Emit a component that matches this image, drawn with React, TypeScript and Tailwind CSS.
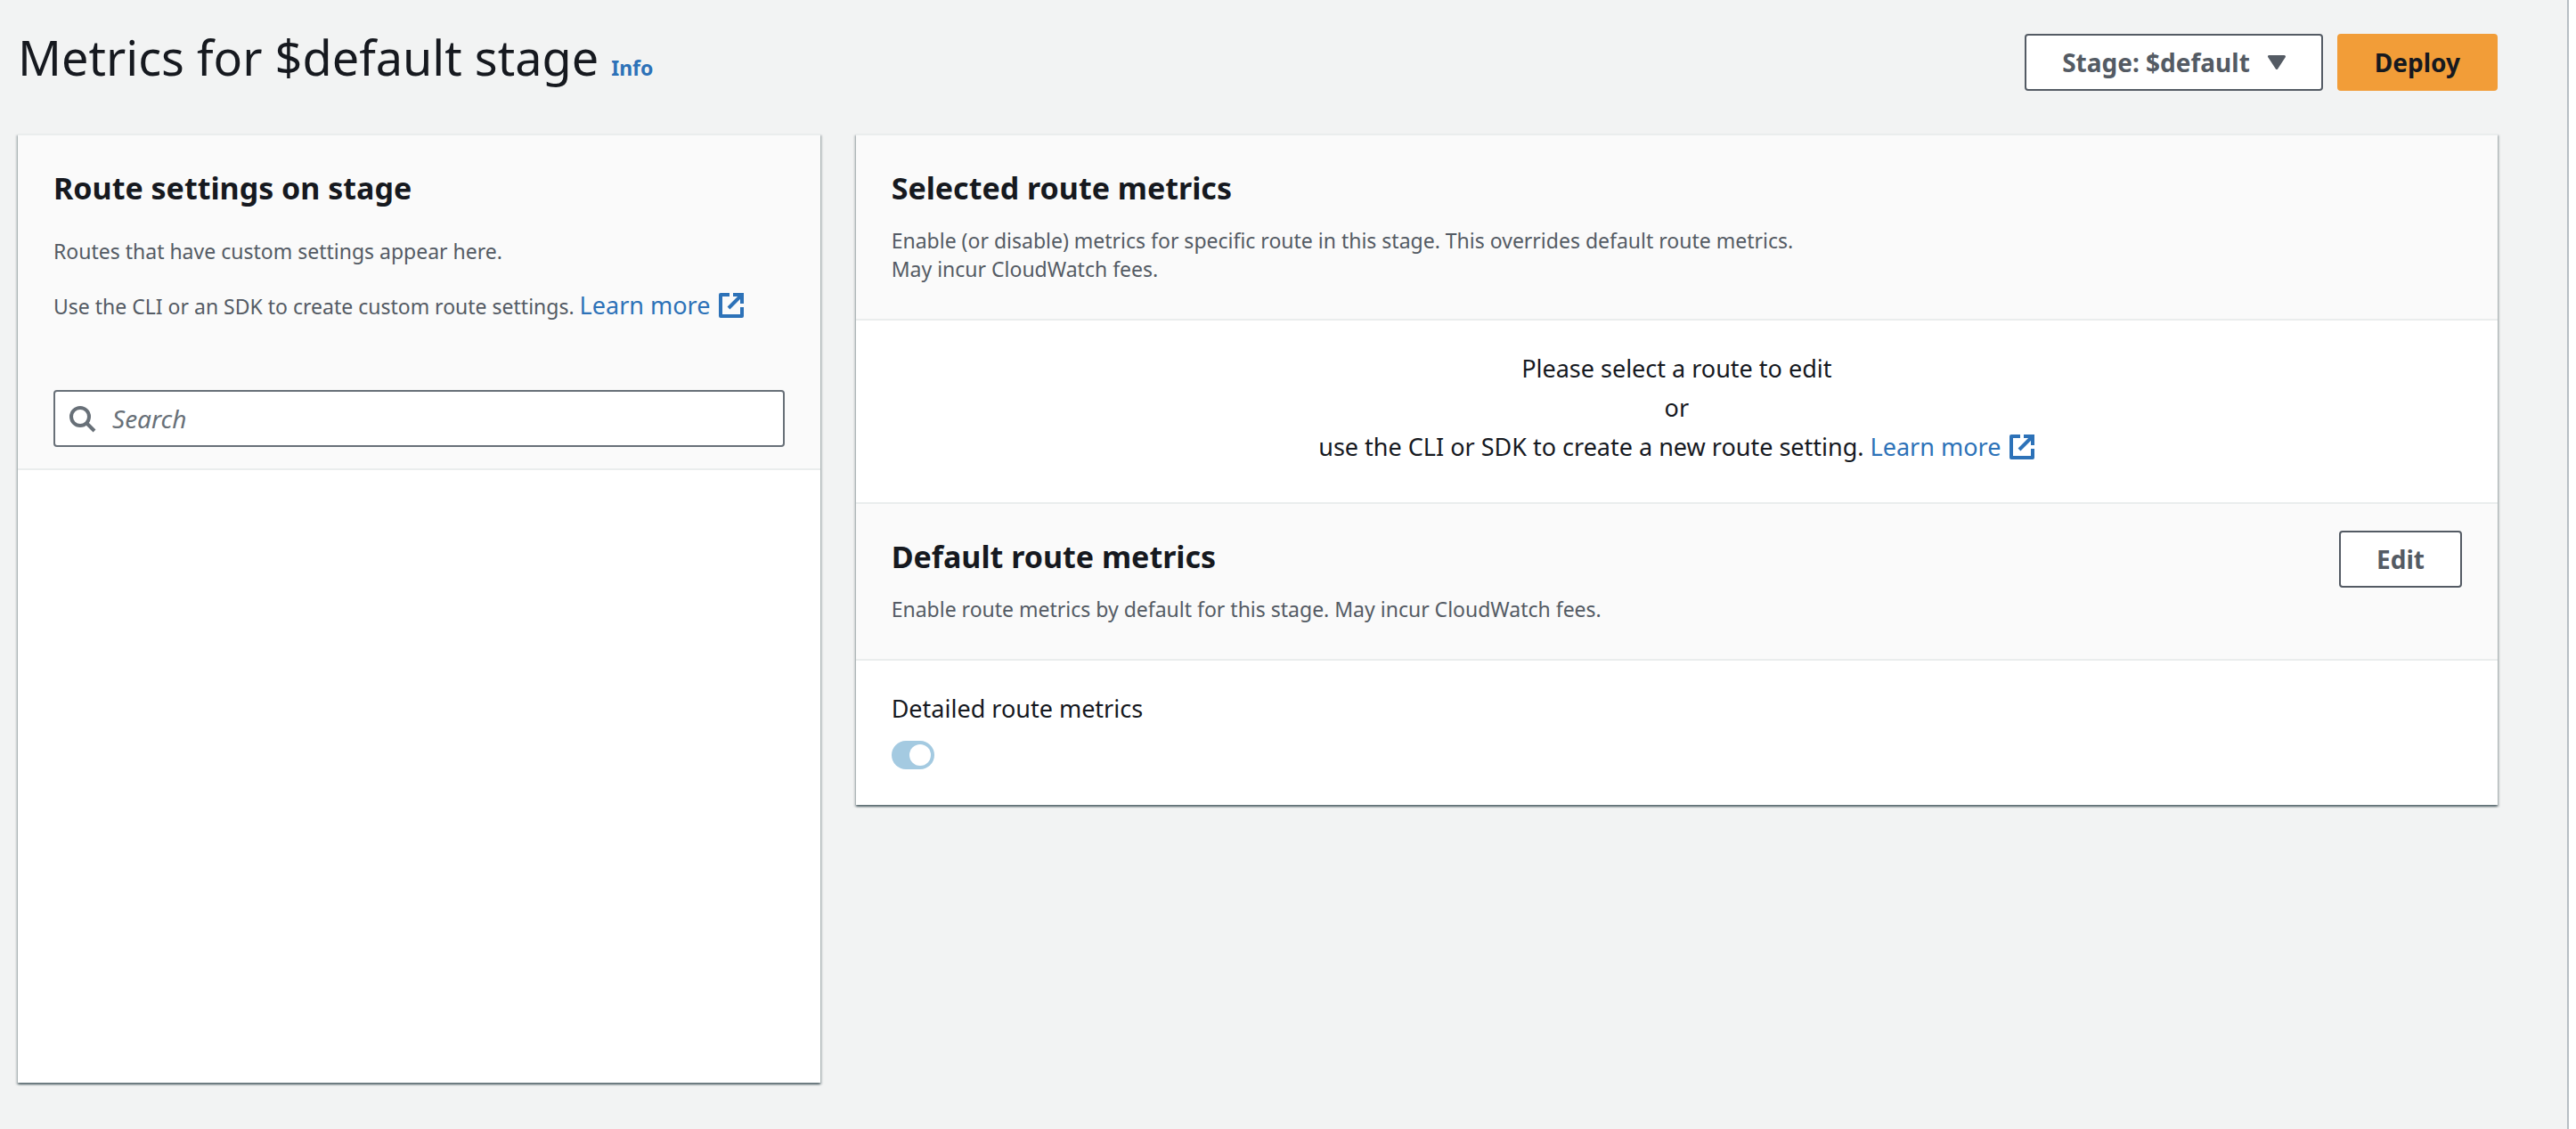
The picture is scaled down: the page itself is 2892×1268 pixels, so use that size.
import { useState } from "react";

function ExternalIcon() {
  return (
    <svg viewBox="0 0 28 28" className="ml-2.5 inline-block size-7 align-[-4px]" aria-hidden="true">
      <path d="M12 2H2v24h24V16" fill="none" stroke="currentColor" strokeWidth="4" strokeLinejoin="round" />
      <path d="M16 2h10v10M26 2L11 17" fill="none" stroke="currentColor" strokeWidth="4" />
    </svg>
  );
}

function LearnMore() {
  return (
    <a href="#learn-more" className="text-[27px] leading-none whitespace-nowrap text-[#2d72b8]">
      Learn more
      <ExternalIcon />
    </a>
  );
}

const cardClass =
  "border-t-2 border-[#eaeded] bg-white shadow-[0_2px_2px_0_rgba(0,28,36,0.5),2px_2px_2px_0_rgba(0,28,36,0.15),-2px_2px_2px_0_rgba(0,28,36,0.15)]";
const buttonClass = "flex h-16 items-center rounded-sm border-2 px-10 text-[28px] font-bold";

export default function App() {
  const [query, setQuery] = useState("");
  return (
    <div className="flex min-h-screen bg-[#f2f3f3] font-['Noto_Sans',sans-serif] text-[#16191f]">
      <main className="min-w-0 flex-1 pr-[78px] pb-12 pl-5">
        <header className="flex h-[150px] items-start justify-between pt-[38px]">
          <h1 className="-mt-3 text-[54px] leading-[76px]">
            Metrics for $default stage{" "}
            <a href="#info" className="text-[23px] font-bold text-[#2d72b8]">Info</a>
          </h1>
          <div className="flex gap-4">
            <button type="button" className={buttonClass + " gap-5 border-[#545b64] bg-white text-[#545b64]"}>
              Stage: $default
              <svg viewBox="0 0 20 16" className="h-4 w-5" aria-hidden="true">
                <path d="M1.5 1.5h17L10 14.5z" fill="currentColor" stroke="currentColor" strokeWidth="3" strokeLinejoin="round" />
              </svg>
            </button>
            <button type="button" className={buttonClass + " border-[#f29d38] bg-[#f29d38]"}>Deploy</button>
          </div>
        </header>

        <div className="grid grid-cols-[minmax(0,901fr)_minmax(0,1844fr)] items-start gap-10">
          <section className={cardClass + " min-h-[1066px]"}>
            <div className="border-b-2 border-[#eaeded] bg-[#fafafa] px-10 pt-[34px] pb-6">
              <h2 className="text-[34px] leading-[50px] font-bold">Route settings on stage</h2>
              <p className="mt-[30px] text-[23px] leading-8 text-[#545b64]">Routes that have custom settings appear here.</p>
              <p className="mt-[30px] text-[23px] leading-8 text-[#545b64]">
                Use the CLI or an SDK to create custom route settings. <LearnMore />
              </p>
              <label className="mt-[78px] flex h-16 items-center gap-4 rounded-sm border-2 border-[#687078] bg-white px-4">
                <svg viewBox="0 0 32 32" className="size-8 text-[#687078]" aria-hidden="true">
                  <circle cx="12" cy="14" r="10" fill="none" stroke="currentColor" strokeWidth="4" />
                  <path d="M19 21l9 9" stroke="currentColor" strokeWidth="4" />
                </svg>
                <input
                  type="search"
                  aria-label="Search"
                  placeholder="Search"
                  value={query}
                  onChange={(e) => setQuery(e.target.value)}
                  className="min-w-0 flex-1 bg-transparent text-[28px] outline-none placeholder:text-[#687078] placeholder:italic"
                />
              </label>
            </div>
          </section>

          <section className={cardClass}>
            <div className="border-b-2 border-[#eaeded] bg-[#fafafa] px-10 pt-[34px] pb-10">
              <h2 className="text-[34px] leading-[50px] font-bold">Selected route metrics</h2>
              <p className="mt-[18px] text-[23px] leading-8 text-[#545b64]">
                Enable (or disable) metrics for specific route in this stage. This overrides default route metrics.
                <br />
                May incur CloudWatch fees.
              </p>
            </div>
            <div className="px-10 pt-8 pb-10 text-center text-[27px] leading-[44px]">
              <p>Please select a route to edit</p>
              <p>or</p>
              <p>use the CLI or SDK to create a new route setting. <LearnMore /></p>
            </div>
            <div className="flex items-start justify-between border-y-2 border-[#eaeded] bg-[#fafafa] px-10 pt-[30px] pb-10">
              <div className="pt-1">
                <h2 className="text-[34px] leading-[50px] font-bold">Default route metrics</h2>
                <p className="mt-[18px] text-[23px] leading-8 text-[#545b64]">
                  Enable route metrics by default for this stage. May incur CloudWatch fees.
                </p>
              </div>
              <button type="button" className={buttonClass + " border-[#545b64] bg-white text-[#545b64]"}>Edit</button>
            </div>
            <div className="px-10 pt-8 pb-10">
              <label htmlFor="detailed" className="block text-[27px] leading-[44px]">Detailed route metrics</label>
              <input
                id="detailed"
                type="checkbox"
                role="switch"
                defaultChecked
                disabled
                className="mt-3.5 block h-8 w-12 appearance-none rounded-full bg-[#a4cae1] before:mt-1 before:ml-5 before:block before:size-6 before:rounded-full before:bg-white"
              />
            </div>
          </section>
        </div>
      </main>
      <div className="w-2.5 border-l-2 border-[#b8bfc4] bg-white" />
    </div>
  );
}
